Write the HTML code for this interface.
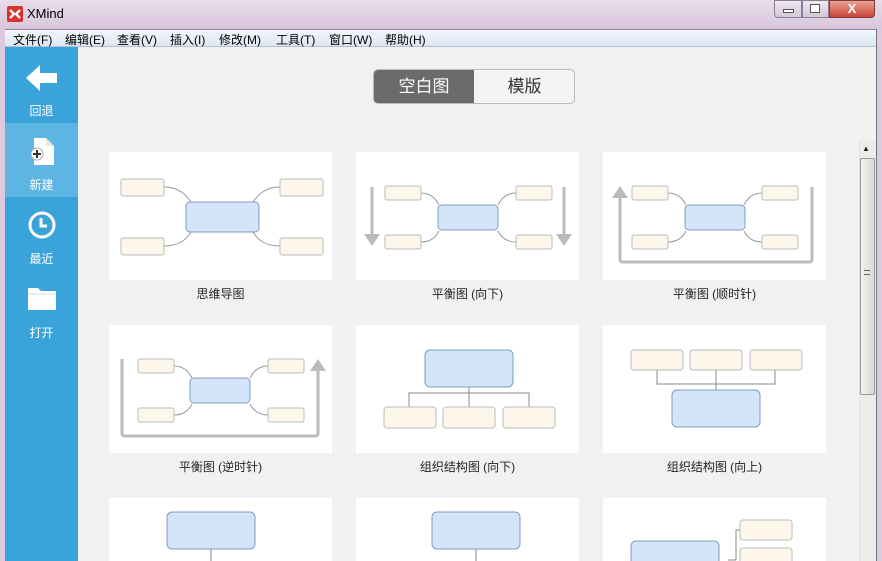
<!DOCTYPE html>
<html style="width:882px;height:561px;overflow:hidden"><head><meta charset="utf-8"><style>
*{margin:0;padding:0;box-sizing:border-box}
body{width:882px;height:561px;overflow:hidden;background:#dccbe0;font-family:"Liberation Sans","Noto Sans CJK SC",sans-serif;position:relative}
.abs{position:absolute}
.title{left:0;top:0;width:882px;height:29px;background:linear-gradient(#e8dcea,#d9c6dc)}
.menu{left:5px;top:29px;width:872px;height:18px;background:linear-gradient(#f4f7fc,#dde6f3);border-top:1px solid #8a8a9a;border-bottom:1px solid #b8bfd0;font-size:12px;color:#000}
.menu span{position:absolute;top:1px}
.side{left:5px;top:47px;width:73px;height:514px;background:#3aa3da}
.sel{left:5px;top:123px;width:73px;height:74px;background:#5cb5e3}
.lab{color:#fff;font-size:12px;width:73px;text-align:center;left:5px}
.content{left:78px;top:47px;width:799px;height:514px;background:#f1f1f1}
.card{background:#fff;width:223px;height:128px}
.cap{font-size:12px;color:#222;width:223px;text-align:center}
</style></head><body>
<div class="abs title"></div>
<svg class="abs" style="left:7px;top:6px" width="16" height="16"><rect width="16" height="16" rx="2" fill="#d8322c"/><path d="M3 4l4 4-4 4M13 4l-4 4 4 4" stroke="#fff" stroke-width="2.4" fill="none"/></svg>
<div class="abs" style="left:27px;top:6px;font-size:13px;color:#000">XMind</div>
<div class="abs" style="left:774px;top:0;width:28px;height:18px;border:1px solid #8a7f92;border-radius:0 0 0 4px;background:linear-gradient(#efe8f1,#d4c6d8)"></div>
<div class="abs" style="left:783px;top:9px;width:11px;height:4px;border:1px solid #555;background:#fff"></div>
<div class="abs" style="left:802px;top:0;width:27px;height:18px;border:1px solid #8a7f92;background:linear-gradient(#efe8f1,#d4c6d8)"></div>
<div class="abs" style="left:810px;top:4px;width:10px;height:9px;border:1px solid #555;background:#fff"></div>
<div class="abs" style="left:829px;top:0;width:46px;height:18px;border:1px solid #7a3a3a;border-radius:0 0 4px 0;background:linear-gradient(#e9a393,#c8453a);color:#fff;font-size:13px;font-weight:bold;text-align:center;line-height:16px">X</div>
<div class="abs menu">
<span style="left:8px">文件(F)</span><span style="left:60px">编辑(E)</span><span style="left:112px">查看(V)</span><span style="left:165px">插入(I)</span><span style="left:214px">修改(M)</span><span style="left:271px">工具(T)</span><span style="left:324px">窗口(W)</span><span style="left:380px">帮助(H)</span>
</div>
<div class="abs side"></div>
<div class="abs sel"></div>
<svg class="abs" style="left:26px;top:64px" width="32" height="28"><path d="M0 14L14 1v8h17v10H14v8z" fill="#fff"/></svg>
<div class="abs lab" style="top:102px">回退</div>
<svg class="abs" style="left:28px;top:137px" width="30" height="30"><path d="M6 1h12l8 8v19H6z" fill="#fff"/><path d="M18 1v8h8" fill="#e6e6e6"/><circle cx="9" cy="17" r="6" fill="#fff" stroke="#aaa"/><path d="M9 13v8M5 17h8" stroke="#333" stroke-width="2"/></svg>
<div class="abs lab" style="top:176px">新建</div>
<svg class="abs" style="left:27px;top:210px" width="30" height="30"><circle cx="15" cy="15" r="12" fill="none" stroke="#fff" stroke-width="3"/><path d="M14 8v8h6" stroke="#fff" stroke-width="3" fill="none"/></svg>
<div class="abs lab" style="top:250px">最近</div>
<svg class="abs" style="left:27px;top:285px" width="30" height="26"><path d="M1 3h10l3 3h15v19H1z" fill="#fff"/><path d="M1 9h28" stroke="#cde" stroke-width="1"/></svg>
<div class="abs lab" style="top:324px">打开</div>
<div class="abs content"></div>
<div class="abs" style="left:373px;top:69px;width:202px;height:35px;border:1px solid #bbb;border-radius:5px;background:#f4f4f4;overflow:hidden">
<div style="position:absolute;left:0;top:0;width:100px;height:35px;background:#6b6b6b;color:#fff;font-size:17px;text-align:center;line-height:33px">空白图</div>
<div style="position:absolute;left:100px;top:0;width:101px;height:35px;color:#333;font-size:17px;text-align:center;line-height:33px">模版</div>
</div>
<div class="abs card" style="left:109px;top:152px"></div>
<div class="abs card" style="left:356px;top:152px"></div>
<div class="abs card" style="left:603px;top:152px"></div>
<div class="abs card" style="left:109px;top:325px"></div>
<div class="abs card" style="left:356px;top:325px"></div>
<div class="abs card" style="left:603px;top:325px"></div>
<div class="abs card" style="left:109px;top:498px;height:63px"></div>
<div class="abs card" style="left:356px;top:498px;height:63px"></div>
<div class="abs card" style="left:603px;top:498px;height:63px"></div>
<div class="abs cap" style="left:109px;top:285px">思维导图</div>
<div class="abs cap" style="left:356px;top:285px">平衡图 (向下)</div>
<div class="abs cap" style="left:603px;top:285px">平衡图 (顺时针)</div>
<div class="abs cap" style="left:109px;top:458px">平衡图 (逆时针)</div>
<div class="abs cap" style="left:356px;top:458px">组织结构图 (向下)</div>
<div class="abs cap" style="left:603px;top:458px">组织结构图 (向上)</div>
<svg class="abs" style="left:0;top:0" width="882" height="561">
<g fill="none" stroke="#999" stroke-width="1">
<path d="M164 187c15 0 22 8 27 15M164 246c15 0 22-6 27-14M280 187c-15 0-22 8-27 15M280 246c-15 0-22-6-27-14"/>
<path d="M421 193c10 0 15 6 18 12M421 242c10 0 15-5 18-11M516 193c-10 0-15 6-18 12M516 242c-10 0-15-5-18-11"/>
<path d="M668 193c10 0 15 6 18 12M668 242c10 0 15-5 18-11M762 193c-10 0-15 6-18 12M762 242c-10 0-15-5-18-11"/>
<path d="M174 366c10 0 15 6 18 12M174 415c10 0 15-5 18-11M268 366c-10 0-15 6-18 12M268 415c-10 0-15-5-18-11"/>
</g>
<g fill="none" stroke="#888" stroke-width="1">
<path d="M469 387v6M409 407v-14h120v14M469 393v14"/>
<path d="M657 370v14h118v-14M716 370v20"/>
<path d="M211 549v12M476 549v12M728 560h8M736 560v-30h4"/>
</g>
<g fill="none" stroke="#bbb" stroke-width="3">
<path d="M372 187v48M564 187v48"/>
<path d="M620 197v62q0 3 3 3h186q3 0 3-3v-72"/>
<path d="M122 359v74q0 3 3 3h190q3 0 3-3v-66"/>
</g>
<g fill="#bbb"><path d="M364 234h16l-8 12zM556 234h16l-8 12zM612 198h16l-8-12zM310 371h16l-8-12z"/></g>
<g fill="#fdf6ea" stroke="#bbb">
<rect x="121" y="179" width="43" height="17" rx="2"/><rect x="121" y="238" width="43" height="17" rx="2"/><rect x="280" y="179" width="43" height="17" rx="2"/><rect x="280" y="238" width="43" height="17" rx="2"/>
<rect x="385" y="186" width="36" height="14" rx="2"/><rect x="385" y="235" width="36" height="14" rx="2"/><rect x="516" y="186" width="36" height="14" rx="2"/><rect x="516" y="235" width="36" height="14" rx="2"/>
<rect x="632" y="186" width="36" height="14" rx="2"/><rect x="632" y="235" width="36" height="14" rx="2"/><rect x="762" y="186" width="36" height="14" rx="2"/><rect x="762" y="235" width="36" height="14" rx="2"/>
<rect x="138" y="359" width="36" height="14" rx="2"/><rect x="138" y="408" width="36" height="14" rx="2"/><rect x="268" y="359" width="36" height="14" rx="2"/><rect x="268" y="408" width="36" height="14" rx="2"/>
<rect x="384" y="407" width="52" height="21" rx="3"/><rect x="443" y="407" width="52" height="21" rx="3"/><rect x="503" y="407" width="52" height="21" rx="3"/>
<rect x="631" y="350" width="52" height="20" rx="3"/><rect x="690" y="350" width="52" height="20" rx="3"/><rect x="750" y="350" width="52" height="20" rx="3"/>
<rect x="740" y="520" width="52" height="20" rx="3"/><rect x="740" y="548" width="52" height="20" rx="3"/>
</g>
<g fill="#d4e5fa" stroke="#7f9cc0">
<rect x="186" y="202" width="73" height="30" rx="4"/>
<rect x="438" y="205" width="60" height="25" rx="4"/>
<rect x="685" y="205" width="60" height="25" rx="4"/>
<rect x="190" y="378" width="60" height="25" rx="4"/>
<rect x="425" y="350" width="88" height="37" rx="5"/>
<rect x="672" y="390" width="88" height="37" rx="5"/>
<rect x="167" y="512" width="88" height="37" rx="5"/>
<rect x="432" y="512" width="88" height="37" rx="5"/>
<rect x="631" y="541" width="88" height="37" rx="5"/>
</g>
</svg>
<div class="abs" style="left:859px;top:140px;width:18px;height:421px;background:#ececec;border-left:1px solid #e0e0e0"></div>
<div class="abs" style="left:862px;top:144px;font-size:8px;color:#222">▲</div>
<div class="abs" style="left:860px;top:158px;width:15px;height:237px;border:1px solid #999;border-radius:2px;background:linear-gradient(90deg,#f2f2f2,#d8d8d8)"></div>
<div class="abs" style="left:864px;top:270px;width:6px;height:5px;border-top:1px solid #666;border-bottom:1px solid #666"></div>
<div class="abs" style="left:876px;top:29px;width:1px;height:532px;background:#777"></div>
</body></html>
